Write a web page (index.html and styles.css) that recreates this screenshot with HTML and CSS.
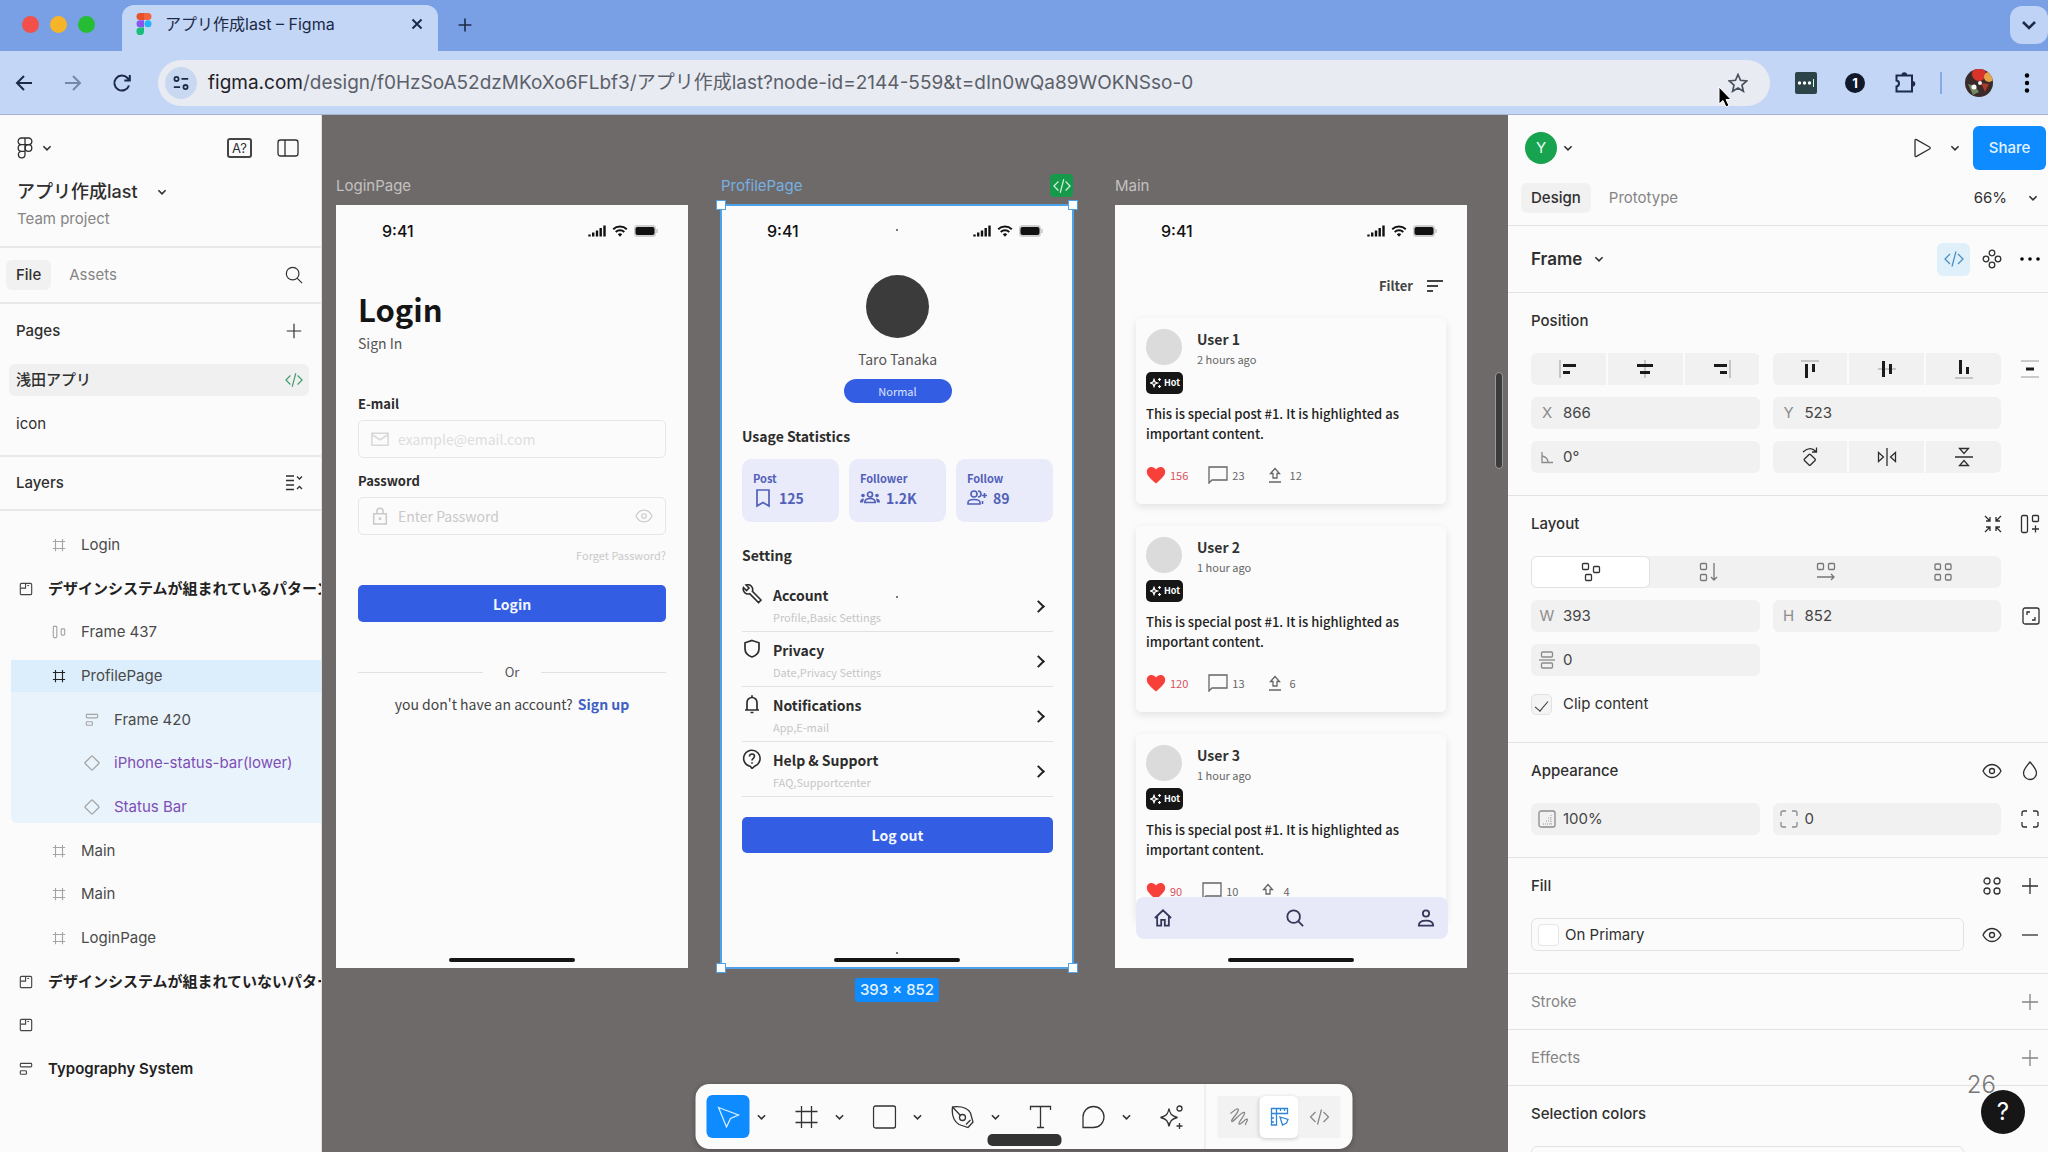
FILE: index.html
```html
<!DOCTYPE html>
<html lang="ja">
<head>
<meta charset="utf-8">
<title>アプリ作成last – Figma</title>
<link rel="stylesheet" href="styles.css">
</head>
<body>
<svg class="sprite" aria-hidden="true">
  <symbol id="chev" viewBox="0 0 10 10"><path d="M2 3.500l3 3 3-3"/></symbol>
  <symbol id="plus" viewBox="0 0 20 20"><path d="M10 2v16M2 10h16"/></symbol>
  <symbol id="minus" viewBox="0 0 20 20"><path d="M2 10h16"/></symbol>
  <symbol id="code" viewBox="0 0 20 20"><path d="M6 5l-5 5 5 5M14 5l5 5-5 5M12 2.500L8 17.500"/></symbol>
  <symbol id="hash" viewBox="0 0 16 16"><path d="M4 1v14M12 1v14M1 4h14M1 12h14"/></symbol>
  <symbol id="section" viewBox="0 0 16 16"><rect x="1.500" y="1.500" width="13" height="13" rx="1.500"/><path d="M2 7h5.500V2M9.500 4h2"/></symbol>
  <symbol id="autoh" viewBox="0 0 16 16"><rect x="1.500" y="1.500" width="4" height="13" rx="1"/><rect x="10.500" y="4.500" width="4" height="7" rx="1"/></symbol>
  <symbol id="autov" viewBox="0 0 16 16"><rect x="1.500" y="1.500" width="13" height="4" rx="1"/><rect x="1.500" y="10" width="7" height="4" rx="1"/></symbol>
  <symbol id="diamond" viewBox="0 0 18 18"><rect x="3.800" y="3.800" width="10.400" height="10.400" rx="1" transform="rotate(45 9 9)"/></symbol>
  <symbol id="eye" viewBox="0 0 20 16"><path d="M1 8c2-4 5-6.500 9-6.500S17 4 19 8c-2 4-5 6.500-9 6.500S3 12 1 8z"/><circle cx="10" cy="8" r="2.500"/></symbol>
  <symbol id="search" viewBox="0 0 20 20"><circle cx="8.500" cy="8.500" r="7"/><path d="M13.700 13.700L19 19"/></symbol>
  <symbol id="signal" viewBox="0 0 18 12"><path d="M1.500 9.500v2M5.200 7.500v4M9 5.500v6M12.700 3v8.500M16.500.5v11" stroke-width="2.400"/></symbol>
  <symbol id="wifi" viewBox="0 0 16 12"><path d="M1.200 4.200a10 10 0 0 1 13.600 0M3.700 7a6.300 6.300 0 0 1 8.600 0" stroke-width="1.900"/><path d="M8 11.800L5.800 9.300a3.200 3.200 0 0 1 4.400 0z" fill="currentColor" stroke="none"/></symbol>
  <symbol id="battery" viewBox="0 0 24 12"><rect x="0" y="0" width="22" height="12" rx="3.500" fill="#cfcfcf" stroke="none"/><rect x="1.500" y="2" width="19" height="8" rx="2" fill="#111" stroke="none"/><path d="M23 4v4" stroke="#bdbdbd"/></symbol>
  <symbol id="heart" viewBox="0 0 20 18"><path d="M10 17.500C4 12.500.8 9.500.8 5.800.8 3 3 1 5.500 1 7.400 1 9 2 10 3.500 11 2 12.600 1 14.500 1 17 1 19.200 3 19.200 5.800c0 3.700-3.200 6.700-9.200 11.700z" fill="#f8403a" stroke="none"/></symbol>
  <symbol id="comment" viewBox="0 0 20 18"><path d="M1 17V1h18v13H4z"/></symbol>
  <symbol id="upload" viewBox="0 0 14 16"><path d="M5 11V6.500H2.500L7 1.500l4.500 5H9V11zM1 15h12"/></symbol>
  <symbol id="spark" viewBox="0 0 12 12"><path d="M4 2.500L5 5l2.500 1L5 7 4 9.500 3 7 .5 6 3 5z"/><path d="M9.500 1v3M8 2.500h3M9.500 8v3M8 9.500h3" stroke-width="1.200"/></symbol>
  <symbol id="four" viewBox="0 0 20 20"><rect x="2" y="2" width="5.500" height="5.500" rx="1"/><rect x="12.500" y="2" width="5.500" height="5.500" rx="1"/><rect x="2" y="12.500" width="5.500" height="5.500" rx="1"/><rect x="12.500" y="12.500" width="5.500" height="5.500" rx="1"/></symbol>
  <symbol id="corners" viewBox="0 0 20 20"><path d="M2 7V4q0-2 2-2h3M13 2h3q2 0 2 2v3M18 13v3q0 2-2 2h-3M7 18H4q-2 0-2-2v-3"/></symbol>
</svg>

<header class="browser">
  <div class="tabstrip">
    <div class="lights"><i class="light red"></i><i class="light amber"></i><i class="light green"></i></div>
    <div class="tab">
      <svg class="favicon" viewBox="0 0 16 22"><path d="M4 0h4v7H4a3.500 3.500 0 0 1 0-7z" fill="#e8502c"/><path d="M8 0h4a3.500 3.500 0 0 1 0 7H8z" fill="#f0653f"/><path d="M4 7.300h4v7H4a3.500 3.500 0 0 1 0-7z" fill="#8b55f0"/><circle cx="12" cy="10.800" r="3.500" fill="#25b4f5"/><path d="M4 14.600h4V18a3.800 3.800 0 1 1-4-3.400z" fill="#17bf78"/></svg>
      <span class="tab-title">アプリ作成last – Figma</span>
      <button class="plain" aria-label="Close tab"><svg class="ic s16 b2" viewBox="0 0 16 16"><path d="M3.500 3.500l9 9M12.500 3.500l-9 9"/></svg></button>
    </div>
    <button class="plain newtab" aria-label="New tab"><svg class="ic s16 b2" viewBox="0 0 20 20"><use href="#plus"/></svg></button>
    <button class="tabsearch" aria-label="Search tabs"><svg class="ic s20" viewBox="0 0 10 10"><use href="#chev"/></svg></button>
  </div>
  <div class="navbar">
    <div class="navkeys">
      <button class="plain" aria-label="Back"><svg class="ic s20 b2" viewBox="0 0 20 20"><path d="M18 10H3M10 3l-7 7 7 7"/></svg></button>
      <button class="plain faded" aria-label="Forward"><svg class="ic s20 b2" viewBox="0 0 20 20"><path d="M2 10h15M10 3l7 7-7 7"/></svg></button>
      <button class="plain" aria-label="Reload"><svg class="ic s20 b2" viewBox="0 0 20 20"><path d="M17 12.500A7.500 7.500 0 1 1 15.500 5L17.500 7M17.800 2v5.500h-5.500"/></svg></button>
    </div>
    <div class="omnibox">
      <span class="site"><svg class="ic s18 b2" viewBox="0 0 20 20"><circle cx="5" cy="5.500" r="2.300"/><path d="M10.500 5.500H18M2 14.500h7"/><circle cx="15" cy="14.500" r="2.300"/></svg></span>
      <p class="url"><b>figma.com</b>/design/f0HzSoA52dzMKoXo6FLbf3/アプリ作成last?node-id=2144-559&amp;t=dIn0wQa89WOKNSso-0</p>
      <button class="plain star" aria-label="Bookmark"><svg class="ic s20" viewBox="0 0 20 20"><path stroke-width="1.700" d="M10 1.500l2.500 5.800 6.300.6-4.800 4.200 1.400 6.200L10 15l-5.400 3.300L6 12.100 1.200 7.900l6.300-.6z"/></svg></button>
    </div>
    <div class="exts">
      <button class="plain" aria-label="Extension"><svg class="s22" viewBox="0 0 22 22"><rect width="22" height="22" rx="2" fill="#2c4447"/><circle cx="4.500" cy="11" r="1.700" fill="#fff"/><circle cx="9.500" cy="11" r="1.700" fill="#fff"/><circle cx="14.500" cy="11" r="1.700" fill="#fff"/><path d="M18.500 7v8" stroke="#cfe"/></svg></button>
      <button class="plain round1">1</button>
      <button class="plain" aria-label="Extensions"><svg class="ic s24 b2" viewBox="0 0 24 24"><path d="M3.500 4.500h15.500V20.500H3.500v-5q2.500-.5 2.500-3t-2.500-3z"/><path d="M8.500 4a2.800 2.800 0 0 1 5.600 0zM19.500 10a2.800 2.800 0 0 1 0 5.600z" fill="currentColor" stroke="none"/></svg></button>
      <i class="bar"></i>
      <button class="plain" aria-label="Account"><svg class="s28" viewBox="0 0 28 28"><clipPath id="pc"><circle cx="14" cy="14" r="14"/></clipPath><g clip-path="url(#pc)"><rect width="28" height="28" fill="#3a2b2a"/><circle cx="14" cy="5" r="7" fill="#d8342c"/><circle cx="24" cy="8" r="5" fill="#e8a24a"/><path d="M3 15l7 2 4 6-6 3z" fill="#6f8a62"/><circle cx="9" cy="18" r="2.500" fill="#fff"/><path d="M16 14l8 1-4 8z" fill="#a83a2a"/><circle cx="15" cy="14" r="2" fill="#eee"/></g></svg></button>
      <button class="plain kebab" aria-label="Menu"><svg class="s20" viewBox="0 0 20 20"><circle cx="10" cy="2.500" r="2.200"/><circle cx="10" cy="10" r="2.200"/><circle cx="10" cy="17.500" r="2.200"/></svg></button>
    </div>
  </div>
  <svg class="cursor" viewBox="0 0 14 22"><path d="M1 1v17l4-3.500 3 6.500 3-1.500-3-6h5z" fill="#000" stroke="#fff"/></svg>
</header>

<main class="app">
  <aside class="left">
    <div class="filehead">
      <div class="row between">
        <button class="plain logo" aria-label="Main menu"><svg class="ic figlogo" viewBox="0 0 16 22"><path d="M8 1H4.500a3.300 3.300 0 0 0 0 6.700H8zM8 1h3.500a3.300 3.300 0 0 1 0 6.700H8zM8 7.700H4.500a3.300 3.300 0 0 0 0 6.600H8zM4.500 14.300A3.300 3.300 0 1 0 8 17.600v-3.300z"/><circle cx="11.500" cy="11" r="3.300"/></svg><svg class="ic s10" viewBox="0 0 10 10"><use href="#chev"/></svg></button>
        <div class="row headicons">
          <button class="aq">A?</button>
          <button class="plain" aria-label="Toggle panel"><svg class="ic s22" viewBox="0 0 22 22"><rect x="1" y="3" width="20" height="16" rx="2.500"/><path d="M8 3v16"/></svg></button>
        </div>
      </div>
      <h1 class="filename">アプリ作成last <svg class="ic s10" viewBox="0 0 10 10"><use href="#chev"/></svg></h1>
      <p class="project">Team project</p>
    </div>
    <div class="lefttabs">
      <button class="pill on">File</button><button class="pill">Assets</button>
      <button class="plain push" aria-label="Find"><svg class="ic s18" viewBox="0 0 20 20"><use href="#search"/></svg></button>
    </div>
    <div class="pages">
      <div class="subhead"><h2>Pages</h2><button class="plain" aria-label="Add page"><svg class="ic s18" viewBox="0 0 20 20"><use href="#plus"/></svg></button></div>
      <a class="page current" href="#p1">浅田アプリ<svg class="ic s18 jade" viewBox="0 0 20 20"><use href="#code"/></svg></a>
      <a class="page" href="#p2">icon</a>
    </div>
    <div class="subhead layershead"><h2>Layers</h2><button class="plain" aria-label="Collapse layers"><svg class="ic s18" viewBox="0 0 18 18"><path d="M1 2h8M1 6.500h8M1 11h8M1 15.500h8M12 2.500l2.500 2.500L17 2.500M12 15l2.500-2.500L17 15"/></svg></button></div>
    <ul class="layers">
      <li class="layer d1"><svg class="ic s14" viewBox="0 0 16 16"><use href="#hash"/></svg>Login</li>
      <li class="layer d0"><svg class="ic s14" viewBox="0 0 16 16"><use href="#section"/></svg>デザインシステムが組まれているパターン</li>
      <li class="layer d1"><svg class="ic s14" viewBox="0 0 16 16"><use href="#autoh"/></svg>Frame 437</li>
      <li class="group"><ul>
        <li class="layer d1 sel"><svg class="ic s14" viewBox="0 0 16 16"><use href="#hash"/></svg>ProfilePage</li>
        <li class="layer d2"><svg class="ic s14" viewBox="0 0 16 16"><use href="#autov"/></svg>Frame 420</li>
        <li class="layer d2 comp"><svg class="ic s18" viewBox="0 0 18 18"><use href="#diamond"/></svg>iPhone-status-bar(lower)</li>
        <li class="layer d2 comp"><svg class="ic s18" viewBox="0 0 18 18"><use href="#diamond"/></svg>Status Bar</li>
      </ul></li>
      <li class="layer d1"><svg class="ic s14" viewBox="0 0 16 16"><use href="#hash"/></svg>Main</li>
      <li class="layer d1"><svg class="ic s14" viewBox="0 0 16 16"><use href="#hash"/></svg>Main</li>
      <li class="layer d1"><svg class="ic s14" viewBox="0 0 16 16"><use href="#hash"/></svg>LoginPage</li>
      <li class="layer d0"><svg class="ic s14" viewBox="0 0 16 16"><use href="#section"/></svg>デザインシステムが組まれていないパターン</li>
      <li class="layer d0"><svg class="ic s14" viewBox="0 0 16 16"><use href="#section"/></svg></li>
      <li class="layer d0"><svg class="ic s14" viewBox="0 0 16 16"><use href="#autov"/></svg>Typography System</li>
    </ul>
  </aside>

  <section class="canvas">
    <article class="frame f1">
      <h2 class="flabel">LoginPage</h2>
      <div class="phone">
        <div class="status"><span>9:41</span><svg class="ic signal" viewBox="0 0 18 12"><use href="#signal"/></svg><svg class="ic wifi" viewBox="0 0 16 12"><use href="#wifi"/></svg><svg class="ic batt" viewBox="0 0 24 12"><use href="#battery"/></svg></div>
        <form class="login">
          <h1>Login</h1>
          <p class="signin">Sign In</p>
          <label for="em">E-mail</label>
          <div class="field"><svg class="ic s18" viewBox="0 0 20 20"><path stroke-width="1.700" d="M1 3.500h18v13.500H1zM1 5l9 6 9-6"/></svg><input id="em" type="email" placeholder="example@email.com"></div>
          <label for="pw">Password</label>
          <div class="field darker"><svg class="ic s18" viewBox="0 0 20 20"><path stroke-width="1.700" d="M3 7.500h14V19H3zM6.500 7.500V5a3.500 3.500 0 0 1 7 0v2.500"/><circle cx="10" cy="13" r="1"/></svg><input id="pw" type="password" placeholder="Enter Password"><svg class="ic s18" viewBox="0 0 20 16"><use href="#eye"/></svg></div>
          <a class="forgot" href="#f">Forget Password?</a>
          <button type="button" class="primary">Login</button>
          <div class="or"><i></i><span>Or</span><i></i></div>
          <p class="signup">you don't have an account? <a href="#s">Sign up</a></p>
        </form>
        <i class="homebar"></i>
      </div>
    </article>

    <article class="frame f2">
      <h2 class="flabel">ProfilePage</h2>
      <div class="phone">
        <div class="status"><span>9:41</span><svg class="ic signal" viewBox="0 0 18 12"><use href="#signal"/></svg><svg class="ic wifi" viewBox="0 0 16 12"><use href="#wifi"/></svg><svg class="ic batt" viewBox="0 0 24 12"><use href="#battery"/></svg></div>
        <div class="profile">
          <div class="who"><i class="face"></i><p>Taro Tanaka</p><span class="tag">Normal</span></div>
          <h3 class="usage">Usage Statistics</h3>
          <div class="stats">
            <div class="stat"><span>Post</span><p><svg class="ic s20" viewBox="0 0 20 20"><path stroke-width="1.700" d="M4 2h12v16l-6-3.500L4 18z"/></svg>125</p></div>
            <div class="stat"><span>Follower</span><p><svg class="ic s20" viewBox="0 0 20 20"><g fill="currentColor" stroke="none"><circle cx="3" cy="7.500" r="1.800"/><circle cx="17" cy="7.500" r="1.800"/><path d="M0 14.500c0-3 1.500-4 4-4l-1 4zM20 14.500c0-3-1.500-4-4-4l1 4z"/></g><circle cx="10" cy="6.500" r="2.500" stroke-width="1.700"/><path stroke-width="1.700" d="M4.800 14.500c0-3 2-4 5.200-4s5.200 1 5.200 4z"/></svg>1.2K</p></div>
            <div class="stat"><span>Follow</span><p><svg class="ic s20" viewBox="0 0 20 20"><g stroke-width="1.600"><circle cx="7" cy="6" r="3"/><path d="M1 16v-1.500c0-2 3-3 6-3s6 1 6 3V16zM11 3a3 3 0 0 1 0 6M15.500 16v-3M17.500 5v5M15 7.500h5"/></g></svg>89</p></div>
          </div>
          <h3 class="setting">Setting</h3>
          <ul class="settings">
            <li><svg class="ic s20" viewBox="0 0 20 20"><path stroke-width="1.600" d="M1.500 3.500l3 3 2.500-2.500-3-3c2-.6 4-.2 5.400 1.200 1.300 1.400 1.600 3.200 1 5L19 16l-2.500 2.500-8.800-8.800c-1.800.6-3.600.2-5-1.100C1.300 7.200.9 5.300 1.500 3.500z"/></svg><div><b>Account</b><small>Profile,Basic Settings</small></div></li>
            <li><svg class="ic s20" viewBox="0 0 20 20"><path stroke-width="1.700" d="M10 1.500l7 2.300v6c0 4-3 7-7 8.200-4-1.200-7-4.200-7-8.200v-6z"/></svg><div><b>Privacy</b><small>Date,Privacy Settings</small></div></li>
            <li><svg class="ic s20" viewBox="0 0 20 20"><path stroke-width="1.700" d="M3 16h14M5 16V8.500a5 5 0 0 1 10 0V16M10 1.200v2M8.500 18.500h3"/></svg><div><b>Notifications</b><small>App,E-mail</small></div></li>
            <li><svg class="ic s20" viewBox="0 0 20 20"><path stroke-width="1.600" d="M8.500 17.500A8.200 8.200 0 1 1 13 17l-3 2.500zM7.500 7.500c0-3.500 5-3.200 5-.2 0 2-2.500 2-2.500 4.200M10 13.200v1.500"/></svg><div><b>Help &amp; Support</b><small>FAQ,Supportcenter</small></div></li>
          </ul>
          <button class="primary">Log out</button>
        </div>
        <i class="homebar"></i>
      </div>
      <i class="outline"></i><i class="h tl"></i><i class="h tr"></i><i class="h bl"></i><i class="h br"></i>
      <i class="dot t"></i><i class="dot m"></i><i class="dot b"></i>
      <span class="dev"><svg class="ic s18" viewBox="0 0 20 20"><use href="#code"/></svg></span>
      <span class="size">393 × 852</span>
    </article>

    <article class="frame f3">
      <h2 class="flabel">Main</h2>
      <div class="phone">
        <div class="status"><span>9:41</span><svg class="ic signal" viewBox="0 0 18 12"><use href="#signal"/></svg><svg class="ic wifi" viewBox="0 0 16 12"><use href="#wifi"/></svg><svg class="ic batt" viewBox="0 0 24 12"><use href="#battery"/></svg></div>
        <div class="feed">
          <button class="filter">Filter<svg class="ic s18" viewBox="0 0 18 18"><path stroke-width="2" d="M1 4h16M1 9h11M1 14h6"/></svg></button>
          <div class="post">
            <div class="by"><i></i><div><b>User 1</b><small>2 hours ago</small></div></div>
            <span class="hot"><svg class="ic s12" viewBox="0 0 12 12"><use href="#spark"/></svg>Hot</span>
            <p>This is special post #1. It is highlighted as important content.</p>
            <div class="acts"><span class="like"><svg class="ic s20" viewBox="0 0 20 18"><use href="#heart"/></svg>156</span><span><svg class="ic s20" viewBox="0 0 20 18"><use href="#comment"/></svg>23</span><span class="up"><svg class="ic s16" viewBox="0 0 14 16"><use href="#upload"/></svg>12</span></div>
          </div>
          <div class="post">
            <div class="by"><i></i><div><b>User 2</b><small>1 hour ago</small></div></div>
            <span class="hot"><svg class="ic s12" viewBox="0 0 12 12"><use href="#spark"/></svg>Hot</span>
            <p>This is special post #1. It is highlighted as important content.</p>
            <div class="acts"><span class="like"><svg class="ic s20" viewBox="0 0 20 18"><use href="#heart"/></svg>120</span><span><svg class="ic s20" viewBox="0 0 20 18"><use href="#comment"/></svg>13</span><span class="up"><svg class="ic s16" viewBox="0 0 14 16"><use href="#upload"/></svg>6</span></div>
          </div>
          <div class="post">
            <div class="by"><i></i><div><b>User 3</b><small>1 hour ago</small></div></div>
            <span class="hot"><svg class="ic s12" viewBox="0 0 12 12"><use href="#spark"/></svg>Hot</span>
            <p>This is special post #1. It is highlighted as important content.</p>
            <div class="acts"><span class="like"><svg class="ic s20" viewBox="0 0 20 18"><use href="#heart"/></svg>90</span><span><svg class="ic s20" viewBox="0 0 20 18"><use href="#comment"/></svg>10</span><span class="up"><svg class="ic s16" viewBox="0 0 14 16"><use href="#upload"/></svg>4</span></div>
          </div>
        </div>
        <nav class="tabbar">
          <svg class="ic s18 b2" viewBox="0 0 20 20"><path d="M1 10l9-8.500L19 10M3.500 8v10.500H8V12h4v6.500h4.500V8"/></svg>
          <svg class="ic s18 b2" viewBox="0 0 20 20"><use href="#search"/></svg>
          <svg class="ic s18 b2" viewBox="0 0 20 20"><circle cx="10" cy="5" r="3.500"/><path d="M2 18.500c0-4 3-5.500 8-5.500s8 1.500 8 5.500z"/></svg>
        </nav>
        <i class="homebar"></i>
      </div>
    </article>
    <i class="scroll"></i>
  </section>

  <aside class="right">
    <div class="people">
      <span class="me">Y</span><svg class="ic s10" viewBox="0 0 10 10"><use href="#chev"/></svg>
      <button class="plain push" aria-label="Present"><svg class="ic s20" viewBox="0 0 20 20"><path d="M3 2.500q0-1.500 1.500-.8L17.500 9q1.500 1 0 2l-13 7.300q-1.500.7-1.500-.8z"/></svg></button>
      <svg class="ic s10 gapped" viewBox="0 0 10 10"><use href="#chev"/></svg>
      <button class="share">Share</button>
    </div>
    <div class="modes">
      <button class="pill on">Design</button><button class="pill">Prototype</button>
      <button class="zoom">66%<svg class="ic s10" viewBox="0 0 10 10"><use href="#chev"/></svg></button>
    </div>
    <div class="kind">
      <h2>Frame</h2><svg class="ic s10" viewBox="0 0 10 10"><use href="#chev"/></svg>
      <button class="devbtn" aria-label="Ready for dev"><svg class="ic s20" viewBox="0 0 20 20"><use href="#code"/></svg></button>
      <button class="plain" aria-label="Create component"><svg class="ic s20" viewBox="0 0 20 20"><circle cx="10" cy="4" r="2.800"/><circle cx="4" cy="10" r="2.800"/><circle cx="16" cy="10" r="2.800"/><circle cx="10" cy="16" r="2.800"/></svg></button>
      <button class="plain more" aria-label="More"><svg class="s20" viewBox="0 0 20 20"><circle cx="2" cy="10" r="1.800"/><circle cx="10" cy="10" r="1.800"/><circle cx="18" cy="10" r="1.800"/></svg></button>
    </div>
    <section class="sec">
      <h3>Position</h3>
      <div class="grid">
        <div class="seg"><button aria-label="Align left"><svg class="ic s20" viewBox="0 0 20 20"><path d="M2 1v18" class="thin"/><path d="M5 6.500h13M5 13.500h7" class="fat"/></svg></button><button aria-label="Align centre"><svg class="ic s20" viewBox="0 0 20 20"><path d="M10 1v18" class="thin"/><path d="M2 6.500h16M5 13.500h10" class="fat"/></svg></button><button aria-label="Align right"><svg class="ic s20" viewBox="0 0 20 20"><path d="M18 1v18" class="thin"/><path d="M2 6.500h13M8 13.500h7" class="fat"/></svg></button></div>
        <div class="seg"><button aria-label="Align top"><svg class="ic s20" viewBox="0 0 20 20"><path d="M1 2h18" class="thin"/><path d="M6.500 5v14M13.500 5v8" class="fat"/></svg></button><button aria-label="Align middle"><svg class="ic s20" viewBox="0 0 20 20"><path d="M1 10h18" class="thin"/><path d="M6.500 2v16M13.500 5v10" class="fat"/></svg></button><button aria-label="Align bottom"><svg class="ic s20" viewBox="0 0 20 20"><path d="M1 19h18" class="thin"/><path d="M6.500 1v14M13.500 8v7" class="fat"/></svg></button></div>
        <button class="plain" aria-label="Distribute"><svg class="ic s20" viewBox="0 0 20 20"><path d="M1 2h18M1 18h18" class="thin"/><path d="M6 10h8" class="fat"/></svg></button>
        <label class="val"><span>X</span><input value="866"></label>
        <label class="val"><span>Y</span><input value="523"></label><i></i>
        <label class="val" aria-label="Rotation"><span><svg class="ic s14" viewBox="0 0 14 14"><path d="M2 2v10.500h11M2 6a7 7 0 0 1 6 6.500"/></svg></span><input value="0°"></label>
        <div class="seg"><button aria-label="Rotate"><svg class="ic s20" viewBox="0 0 20 20"><rect x="5.500" y="8.500" width="8.500" height="8.500" rx="1" transform="rotate(45 9.750 12.750)"/><path d="M3 5q7-6.500 13-.5M16.500.5v4.500H12"/></svg></button><button aria-label="Flip horizontal"><svg class="ic s20" viewBox="0 0 20 20"><path d="M10 1v18M1.500 5.500v9L6.500 10zM18.500 5.500v9L13.500 10z"/></svg></button><button aria-label="Flip vertical"><svg class="ic s20" viewBox="0 0 20 20"><path d="M1 10h18M5.500 1.500h9L10 6.500zM5.500 18.500h9L10 13.500z"/></svg></button></div>
      </div>
    </section>
    <section class="sec">
      <div class="sechead"><h3>Layout</h3><button class="plain" aria-label="Resize to fit"><svg class="ic s18" viewBox="0 0 18 18"><path d="M1 1l5 5M6 2v4H2M17 1l-5 5M12 2v4h4M1 17l5-5M2 12h4v4M17 17l-5-5M16 12h-4v4"/></svg></button><button class="plain" aria-label="Add auto layout"><svg class="ic s20" viewBox="0 0 20 20"><rect x="1.500" y="1.500" width="6" height="17" rx="1.500"/><rect x="12.500" y="1.500" width="6" height="6" rx="1"/><path d="M15.500 11.500v7M12 15h7"/></svg></button></div>
      <div class="grid">
        <div class="flow"><button class="on" aria-label="Freeform"><svg class="ic s20" viewBox="0 0 20 20"><rect x="1.500" y="1.500" width="6" height="6" rx="1"/><rect x="12.500" y="4.500" width="6" height="6" rx="1"/><rect x="4.500" y="12.500" width="6" height="6" rx="1"/></svg></button><button aria-label="Vertical"><svg class="ic s20" viewBox="0 0 20 20"><rect x="1.500" y="1.500" width="6" height="6" rx="1"/><rect x="1.500" y="12.500" width="6" height="6" rx="1"/><path d="M15 1v17M12 15l3 3 3-3"/></svg></button><button aria-label="Horizontal"><svg class="ic s20" viewBox="0 0 20 20"><rect x="1.500" y="1.500" width="6" height="6" rx="1"/><rect x="12.500" y="1.500" width="6" height="6" rx="1"/><path d="M1 15h17M15 12l3 3-3 3"/></svg></button><button aria-label="Grid"><svg class="ic s20" viewBox="0 0 20 20"><use href="#four"/></svg></button></div><i></i>
        <label class="val"><span>W</span><input value="393"></label>
        <label class="val"><span>H</span><input value="852"></label>
        <button class="plain" aria-label="Lock aspect ratio"><svg class="ic s18" viewBox="0 0 18 18"><rect x="1" y="1" width="16" height="16" rx="2"/><path d="M5 8V5h3M13 10v3h-3"/></svg></button>
        <label class="val" aria-label="Spacing"><span><svg class="ic s18" viewBox="0 0 18 18"><rect x="3.500" y="1" width="11" height="5" rx="1"/><path d="M1 9h16"/><rect x="3.500" y="12" width="11" height="5" rx="1"/></svg></span><input value="0"></label><i></i><i></i>
        <label class="clip"><input type="checkbox" checked>Clip content</label>
      </div>
    </section>
    <section class="sec">
      <div class="sechead"><h3>Appearance</h3><button class="plain" aria-label="Hide"><svg class="ic s20" viewBox="0 0 20 16"><use href="#eye"/></svg></button><button class="plain" aria-label="Blend"><svg class="ic s20" viewBox="0 0 20 20"><path d="M10 1c4 4.500 6.500 7.500 6.500 11a6.500 6.500 0 0 1-13 0C3.500 8.500 6 5.500 10 1z"/></svg></button></div>
      <div class="grid">
        <label class="val" aria-label="Opacity"><span><svg class="ic s18" viewBox="0 0 18 18"><rect x="1" y="1" width="16" height="16" rx="2"/><path d="M5 14h9M8 11h6M10 8h4M13 5v9" stroke="#bbb" stroke-dasharray="1 1"/></svg></span><input value="100%"></label>
        <label class="val" aria-label="Corner radius"><span><svg class="ic s20" viewBox="0 0 20 20"><use href="#corners"/></svg></span><input value="0"></label>
        <button class="plain" aria-label="Individual corners"><svg class="ic s20" viewBox="0 0 20 20"><use href="#corners"/></svg></button>
      </div>
    </section>
    <section class="sec">
      <div class="sechead"><h3>Fill</h3><button class="plain" aria-label="Styles"><svg class="ic s20" viewBox="0 0 20 20"><circle cx="5" cy="5" r="3"/><circle cx="15" cy="5" r="3"/><circle cx="5" cy="15" r="3"/><circle cx="15" cy="15" r="3"/></svg></button><button class="plain" aria-label="Add fill"><svg class="ic s20" viewBox="0 0 20 20"><use href="#plus"/></svg></button></div>
      <div class="fillrow"><button class="style"><i></i>On Primary</button><button class="plain" aria-label="Hide fill"><svg class="ic s20" viewBox="0 0 20 16"><use href="#eye"/></svg></button><button class="plain" aria-label="Remove fill"><svg class="ic s20" viewBox="0 0 20 20"><use href="#minus"/></svg></button></div>
    </section>
    <section class="sec off"><div class="sechead"><h3>Stroke</h3><button class="plain" aria-label="Add stroke"><svg class="ic s20" viewBox="0 0 20 20"><use href="#plus"/></svg></button></div></section>
    <section class="sec off"><div class="sechead"><h3>Effects</h3><button class="plain" aria-label="Add effect"><svg class="ic s20" viewBox="0 0 20 20"><use href="#plus"/></svg></button></div></section>
    <section class="sec"><h3>Selection colors</h3><div class="fillrow"><button class="style last" aria-label="Colour"></button></div></section>
  </aside>
</main>

<div class="toolbar">
  <button class="tool active" aria-label="Move"><svg class="ic s24" viewBox="0 0 24 24"><path d="M2 2.500l20 7.500-8 3.500-4 8.500z"/></svg></button><svg class="ic s10" viewBox="0 0 10 10"><use href="#chev"/></svg>
  <button class="tool" aria-label="Frame"><svg class="ic s24" viewBox="0 0 24 24"><path d="M7 1v22M17 1v22M1 6.500h22M1 17.500h22"/></svg></button><svg class="ic s10" viewBox="0 0 10 10"><use href="#chev"/></svg>
  <button class="tool" aria-label="Rectangle"><svg class="ic s24" viewBox="0 0 24 24"><rect x="1" y="1" width="22" height="22" rx="2"/></svg></button><svg class="ic s10" viewBox="0 0 10 10"><use href="#chev"/></svg>
  <button class="tool" aria-label="Pen"><svg class="ic s24" viewBox="0 0 24 24"><path d="M2 2c8-1 15 1 18 6l2.500 9-5 5.500-9-3C3 16 1 10 2 2zM2 2l8 8.500M20 15l-4.500 4.500"/><circle cx="12" cy="12.500" r="3"/></svg></button><svg class="ic s10" viewBox="0 0 10 10"><use href="#chev"/></svg>
  <button class="tool wide" aria-label="Text"><svg class="ic s24" viewBox="0 0 24 24"><path d="M2 5V1.500h20V5M12 1.500v21M8.500 22.500h7"/></svg></button>
  <button class="tool" aria-label="Comment"><svg class="ic s24" viewBox="0 0 24 24"><path d="M1.500 22.500V12A10.500 10.500 0 1 1 12 22.500z"/></svg></button><svg class="ic s10" viewBox="0 0 10 10"><use href="#chev"/></svg>
  <button class="tool" aria-label="Actions"><svg class="ic s24" viewBox="0 0 24 24"><path d="M9.500 3.500c1 5.500 2.500 7.500 8.500 9-6 1.500-7.500 3.500-8.500 9-1-5.500-2.500-7.500-8.500-9 6-1.500 7.500-3.500 8.500-9z"/><circle cx="20" cy="3.500" r="2.500"/><path d="M20 18v6M17 21h6"/></svg></button>
  <div class="modeswitch">
    <button aria-label="Draw"><svg class="ic s20" viewBox="0 0 20 20"><path d="M2 6.500C5 4 8 1.500 9.500 2S8 7 5.500 10s-3 5-1.500 4.500S10 8.500 13 6.500s4-1.500 2.500 1.500-6 8-5 9 4-2.500 6-4 3-1 2 1-2 3-1.500 4"/></svg></button>
    <button class="on" aria-label="Design"><svg class="ic s20" viewBox="0 0 20 20"><path d="M2 18V1.500h16v5H7V18zM2 6.500h5M7 1.500v5M11 1.500v2.500M15 1.500v2.500M2 11h2.500M2 15h2.500M10.500 10l8 2.500-1.500 3.500-4 2z"/></svg></button>
    <button aria-label="Dev mode"><svg class="ic s20" viewBox="0 0 20 20"><use href="#code"/></svg></button>
  </div>
  <i class="dockbar"></i>
</div>
<span class="slide-no">26</span>
<button class="help">?</button>
</body>
</html>
```
FILE: styles.css
```css
* { box-sizing: border-box; }
body, h1, h2, h3, p, ul { margin: 0; padding: 0; }
ul { list-style: none; }
body {
  height: 100vh;
  display: flex;
  flex-direction: column;
  overflow: hidden;
  position: relative;
  font: 15px/20px Inter, "Noto Sans CJK JP", sans-serif;
  color: #2f2f2f;
  background: #fbfbfb;
}
button, input { font: inherit; color: inherit; margin: 0; padding: 0; border: 0; background: none; }
a { color: inherit; text-decoration: none; }
i { font-style: normal; }
.sprite { position: absolute; width: 0; height: 0; }
.ic { fill: none; stroke: currentColor; stroke-width: 1.300; flex: none; display: block; }
.b2 { stroke-width: 2; }
.s10 { width: 12px; height: 12px; }
.s12 { width: 12px; height: 12px; }
.s14 { width: 14px; height: 14px; }
.s16 { width: 16px; height: 16px; }
.s18 { width: 18px; height: 18px; }
.s20 { width: 20px; height: 20px; }
.s22 { width: 22px; height: 22px; }
.s24 { width: 24px; height: 24px; }
.s28 { width: 28px; height: 28px; }
.plain { display: flex; align-items: center; justify-content: center; }
.push { margin-left: auto; }
.row { display: flex; align-items: center; }
.between { justify-content: space-between; }

/* Browser chrome */
.browser { flex: none; position: relative; color: #1c2a48; }
.tabstrip { display: flex; align-items: center; height: 51px; background: #799fe5; padding: 0 0 2px 22px; }
.lights { display: flex; gap: 11px; width: 100px; }
.light { width: 17px; height: 17px; border-radius: 50%; }
.red { background: #f3504c; }
.amber { background: #f6b429; }
.green { background: #26bd35; }
.tab { align-self: flex-end; display: flex; align-items: center; width: 316px; height: 46px; margin-bottom: -2px; padding: 0 13px 8px 14px; border-radius: 12px 12px 0 0; background: #c3d6f5; }
.favicon { width: 16px; height: 22px; margin-right: 13px; }
.tab-title { flex: 1; font-size: 16px; white-space: nowrap; }
.newtab { margin-left: 19px; }
.tabsearch { margin-left: auto; display: flex; align-items: center; justify-content: center; width: 38px; height: 38px; border-radius: 12px; background: #bed3f5; }
.navbar { display: flex; align-items: center; height: 64px; background: #c3d6f5; border-bottom: 1px solid #a3b3d0; }
.navkeys { display: flex; gap: 29px; width: 158px; padding-left: 14px; }
.faded { opacity: .45; }
.omnibox { flex: 1; display: flex; align-items: center; height: 46px; padding: 0 22px 0 7px; border-radius: 23px; background: #e8ebf2; }
.site { display: flex; align-items: center; justify-content: center; width: 32px; height: 32px; border-radius: 50%; background: #c9d8f1; }
.url { flex: 1; margin-left: 11px; font-size: 19px; line-height: 26px; color: #5b6069; white-space: nowrap; }
.url b { font-weight: 400; color: #1f2126; }
.star { color: #4a505c; }
.exts { display: flex; align-items: center; gap: 28px; width: 278px; padding-left: 25px; }
.round1 { width: 20px; height: 20px; border-radius: 50%; background: #101a2c; color: #fff; font-size: 13px; font-weight: 700; }
.bar { width: 2px; height: 22px; margin: 0 -5px; background: #86aae6; }
.kebab { margin-left: -4px; }
.cursor { position: absolute; left: calc(100% - 330px); top: 86px; width: 14px; height: 22px; }

.app { flex: 1; min-height: 0; display: flex; }

/* Left panel */
.left { width: 322px; flex: none; display: flex; flex-direction: column; overflow: hidden; border-right: 1px solid #e0e0e0; background: #fbfbfb; }
.filehead { height: 133px; padding: 22px 22px 0 17px; border-bottom: 2px solid #e9e9e9; }
.logo { gap: 8px; }
.figlogo { width: 16px; height: 22px; }
.headicons { gap: 25px; }
.aq { width: 25px; height: 20px; border: 2px solid #444; border-radius: 3px; font-size: 13px; line-height: 16px; }
.filename { display: flex; align-items: center; gap: 18px; margin-top: 20px; font-size: 18px; line-height: 26px; font-weight: 500; }
.project { margin-top: 4px; color: #858585; }
.lefttabs { display: flex; align-items: center; height: 56px; padding: 0 18px 0 6px; border-bottom: 2px solid #e9e9e9; }
.pill { height: 30px; padding: 0 10px; border-radius: 6px; color: #858585; }
.pill.on { background: #f1f1f1; color: #2f2f2f; font-weight: 500; }
.left .pill + .pill { margin-left: 8px; }
.subhead { display: flex; align-items: center; justify-content: space-between; height: 54px; padding: 0 18px 0 16px; }
h2, h3 { font-size: 15px; line-height: 20px; font-weight: 500; }
.pages { height: 153px; border-bottom: 2px solid #e9e9e9; }
.page { display: flex; align-items: center; justify-content: space-between; height: 32px; margin: 0 12px 12px 9px; padding: 0 6px 0 7px; border-radius: 6px; }
.pages .subhead { margin-bottom: 6px; }
.page.current { background: #f0f0f0; font-weight: 500; }
.jade { color: #3f9c6c; }
.layershead { border-bottom: 2px solid #e9e9e9; }
.layers { flex: 1; display: grid; grid-template-rows: repeat(13, minmax(32px, 1fr)); align-items: center; padding: 12px 0 61px; }
.layer { display: flex; align-items: center; height: 32px; white-space: nowrap; color: #4a4a4a; }
.layer svg { color: #a5a5a5; }
.d0 { gap: 15px; padding-left: 19px; font-weight: 600; color: #222; }
.d0 svg { color: #444; }
.d1 { gap: 15px; padding-left: 52px; }
.group { grid-row: span 4; align-self: stretch; margin: 6px 0 6px 11px; background: #e9f3fb; border-radius: 6px 0 0 6px; }
.group ul { height: 100%; display: flex; flex-direction: column; justify-content: space-between; }
.group .d1 { padding-left: 41px; }
.group .d2 { gap: 15px; padding-left: 74px; }
.group .comp { gap: 13px; padding-left: 72px; }
.comp { color: #7d4fb5; }
.sel { background: #dceefb; }
.sel svg { color: #222; }

/* Canvas: frames are placed freely */
.canvas { flex: 1; min-width: 0; position: relative; overflow: hidden; background: #6e6a69; }
.frame { position: absolute; top: 61px; width: 352px; }
.f1 { left: 14px; }
.f2 { left: 399px; }
.f3 { left: 793px; }
.flabel { height: 29px; font-weight: 400; color: #c4c1c0; }
.f2 .flabel { color: #77b0e2; }
.phone { position: relative; height: 763px; overflow: hidden; background: #fbfbfb; font-family: "Noto Sans CJK JP", sans-serif; font-size: 14px; line-height: 24px; color: #2c2c2c; }
.status { display: flex; align-items: center; height: 52px; padding: 0 30px 0 46px; font: 500 16px/20px Inter, sans-serif; color: #111; }
.status span { margin-right: auto; }
.signal { width: 18px; height: 12px; margin-right: 6px; }
.wifi { width: 16px; height: 12px; margin-right: 6px; }
.batt { width: 24px; height: 12px; }
.homebar { position: absolute; left: 50%; bottom: 6px; width: 126px; height: 4px; margin-left: -63px; border-radius: 2px; background: #151515; }
.primary { display: block; width: 100%; height: 37px; border-radius: 5px; background: #335ee4; color: #f2f5ff; font-weight: 700; }

.login { padding: 32px 22px 0; }
.login h1 { font-size: 31px; line-height: 40px; font-weight: 700; color: #151515; }
.signin { margin-top: 2px; color: #555; }
.login label { display: block; margin-top: 13px; font-size: 13px; line-height: 20px; font-weight: 700; }
.signin + label { margin-top: 39px; }
.field { display: flex; align-items: center; gap: 9px; height: 38px; margin-top: 6px; padding: 0 12px; border: 1px solid #e6e6e6; border-radius: 5px; color: #d8d8d8; }
.field input { flex: 1; min-width: 0; outline: 0; }
.field input::placeholder { color: #dedede; opacity: 1; }
.darker, .field.darker input::placeholder { color: #c9c9c9; }
.forgot { display: block; margin: 12px 0 22px; text-align: right; font-size: 11px; line-height: 16px; color: #c9c9c9; }
.or { display: flex; align-items: center; gap: 22px; margin-top: 40px; font-size: 13px; line-height: 20px; color: #555; }
.or i { flex: 1; height: 1px; background: #e0e0e0; }
.signup { margin-top: 10px; text-align: center; color: #444; white-space: nowrap; }
.signup a { margin-left: 2px; font-weight: 700; color: #3f5fc4; }

.profile { padding: 18px 20px 0 21px; }
.who { display: flex; flex-direction: column; align-items: center; color: #555; }
.face { width: 63px; height: 63px; margin-bottom: 9px; border-radius: 50%; background: #3b3b3b; }
.tag { width: 108px; height: 24px; margin-top: 8px; border-radius: 12px; background: #335ee4; color: #dbe4ff; font-size: 11px; text-align: center; }
.phone h3 { font-size: 14px; line-height: 24px; font-weight: 700; margin-top: 21px; }
.stats { display: grid; grid-template-columns: repeat(3, 1fr); gap: 10px; margin-top: 11px; }
.stat { height: 63px; padding: 11px; border-radius: 9px; background: #eaebfa; color: #5160b8; font-weight: 700; }
.stat span { display: block; font-size: 11px; line-height: 16px; }
.stat p { display: flex; align-items: center; gap: 6px; }
.settings { margin: 10px 0 20px; }
.settings li { display: flex; gap: 11px; height: 55px; padding-top: 7px; border-bottom: 1px solid #e2e2e2; }
.settings li::after { content: ""; width: 7px; height: 7px; margin: 18px 10px 0 auto; border: solid #222; border-width: 2px 2px 0 0; transform: rotate(45deg); }
.settings b { display: block; line-height: 22px; font-weight: 700; }
.settings small { display: block; margin-top: 3px; font-size: 11px; line-height: 16px; color: #c6c6c6; }
.profile .primary { height: 36px; }

.outline { position: absolute; left: -1px; right: -1px; top: 28px; bottom: -1px; border: 2px solid #4ea2ea; }
.h { position: absolute; width: 10px; height: 10px; background: #fff; border: 1px solid #4ea2ea; }
.tl { left: -5px; top: 24px; }
.tr { right: -5px; top: 24px; }
.bl { left: -5px; bottom: -5px; }
.br { right: -5px; bottom: -5px; }
.dot { position: absolute; left: 175px; width: 2px; height: 2px; background: #777; }
.t { top: 53px; }
.m { top: 420px; }
.b { bottom: 14px; }
.dev { position: absolute; right: 0; top: -2px; width: 23px; height: 23px; display: flex; align-items: center; justify-content: center; border-radius: 4px; background: #17994c; color: #d5f5e0; }
.size { position: absolute; left: 50%; bottom: -34px; transform: translateX(-50%); padding: 2px 5px; border-radius: 3px; background: #0d8bff; color: #e4f3ff; font-weight: 500; white-space: nowrap; }

.feed { padding: 19px 21px 0; }
.filter { display: flex; align-items: center; gap: 13px; margin: 0 2px 22px auto; font-size: 13px; line-height: 20px; font-weight: 700; color: #444; }
.post { height: 186px; margin-bottom: 22px; padding: 11px 10px; border-radius: 5px; background: #fbfbfb; box-shadow: 0 3px 9px rgba(0, 0, 0, .1); }
.by { display: flex; gap: 15px; height: 43px; }
.by i { width: 36px; height: 36px; border-radius: 50%; background: #dcdbdb; }
.by b { display: block; line-height: 20px; font-size: 14px; font-weight: 700; color: #333; }
.by small { display: block; margin-top: 2px; font-size: 11px; line-height: 16px; color: #666; }
.hot { display: flex; align-items: center; gap: 2px; width: 37px; height: 22px; padding-left: 4px; border-radius: 5px; background: #161616; color: #fff; font-size: 9px; font-weight: 700; }
.post p { margin: 10px 0 21px; font-size: 13px; line-height: 20px; font-weight: 500; color: #222; }
.acts { display: flex; gap: 20px; font-size: 11px; line-height: 20px; color: #666; }
.acts span { display: flex; align-items: center; gap: 4px; }
.acts .like { color: #d9505c; }
.acts .up { margin-left: 2px; gap: 7px; }
.tabbar { position: absolute; left: 21px; right: 19px; bottom: 29px; display: flex; align-items: center; justify-content: space-between; height: 42px; padding: 0 13px 0 18px; border-radius: 8px; background: #e8e9f8; color: #34375a; }
.scroll { position: absolute; right: 5px; top: 257px; width: 8px; height: 97px; border: 1px solid #999; border-radius: 4px; background: #3c3c3c; }

/* Right panel */
.right { width: 540px; flex: none; overflow: hidden; background: #fbfbfb; }
.people { display: flex; align-items: center; height: 66px; padding: 0 2px 0 17px; gap: 5px; }
.me { width: 32px; height: 32px; border-radius: 50%; background: #17a34f; color: #eafff1; line-height: 32px; text-align: center; }
.gapped { margin: 0 7px 0 12px; }
.share { width: 73px; height: 44px; border-radius: 6px; background: #0d8bff; color: #e4f3ff; font-weight: 500; }
.modes { display: flex; align-items: center; gap: 8px; height: 45px; padding: 0 9px 10px 13px; border-bottom: 1px solid #e3e3e3; }
.zoom { display: flex; align-items: center; gap: 20px; margin-left: auto; }
.kind { display: flex; align-items: center; height: 67px; padding: 0 8px 0 23px; border-bottom: 1px solid #e3e3e3; }
.kind h2 { margin-right: 11px; font-size: 17px; font-weight: 600; }
.devbtn { display: flex; align-items: center; justify-content: center; width: 33px; height: 33px; margin: 0 12px 0 auto; border-radius: 6px; background: #dff0fb; color: #4a8fc4; }
.more { margin-left: 18px; }
.sec { padding: 0 8px 22px 23px; border-bottom: 1px solid #e3e3e3; }
.sec h3 { line-height: 56px; margin-bottom: 4px; }
.sechead { display: flex; align-items: center; gap: 18px; height: 56px; margin-bottom: 4px; }
.sechead h3 { margin: 0 auto 0 0; }
.off { padding-bottom: 0; color: #858585; }
.off .sechead { height: 55px; margin: 0; }
.off h3 { font-weight: 400; }
.grid { display: grid; grid-template-columns: minmax(0, 1fr) minmax(0, 1fr) 26px; column-gap: 13px; row-gap: 12px; grid-auto-rows: 32px; }
.grid > .plain { justify-content: flex-end; }
.seg { display: flex; gap: 2px; border-radius: 6px; overflow: hidden; }
.seg button { flex: 1; display: flex; align-items: center; justify-content: center; background: #f1f1f1; }
.grid .thin { stroke: #9a9a9a; stroke-width: 1; }
.grid .fat { stroke: #1b1b1b; stroke-width: 3; }
.val { display: flex; align-items: center; border-radius: 6px; background: #f1f1f1; color: #444; }
.val span { width: 32px; display: flex; justify-content: center; color: #8c8c8c; }
.val input { flex: 1; min-width: 0; outline: 0; }
.flow { grid-column: span 2; display: flex; border-radius: 6px; background: #f1f1f1; color: #777; }
.flow button { flex: 1; display: flex; align-items: center; justify-content: center; }
.flow .on { border: 1px solid #e2e2e2; border-radius: 6px; background: #fff; color: #333; }
.clip { display: flex; align-items: center; gap: 11px; }
.clip input { appearance: none; display: grid; place-items: center; width: 21px; height: 21px; border: 1px solid #e2e2e2; border-radius: 5px; background: #f4f4f4; }
.clip input::before { content: ""; width: 6px; height: 12px; border: solid #333; border-width: 0 1px 1px 0; transform: rotate(40deg); }
.fillrow { display: flex; align-items: center; gap: 18px; }
.style { flex: 1; display: flex; align-items: center; gap: 6px; height: 33px; padding: 0 6px; border: 1px solid #e2e2e2; border-radius: 6px; }
.style i { width: 21px; height: 22px; border: 1px solid #e6e6e6; border-radius: 4px; background: #fff; }
.last { margin-right: 76px; }

/* Floating tool bar */
.toolbar { position: absolute; left: 50%; bottom: 3px; transform: translateX(-50%); display: flex; align-items: center; height: 65px; padding-left: 11px; border-radius: 14px; background: #fbfbfb; box-shadow: 0 1px 5px rgba(0, 0, 0, .25); color: #333; }
.tool { display: flex; align-items: center; justify-content: center; width: 43px; height: 43px; margin-right: 6px; border-radius: 6px; }
.toolbar > svg { margin-right: 17px; }
.wide { margin-right: 10px; }
.active { background: #0d8bff; color: #d8eeff; }
.modeswitch { display: flex; align-items: center; height: 100%; margin-left: 6px; padding: 0 12px; border-left: 1px solid #e3e3e3; }
.modeswitch button { display: flex; align-items: center; justify-content: center; width: 42px; height: 42px; background: #f2f2f2; color: #888; }
.modeswitch .on { width: 39px; border-radius: 6px; background: #fff; color: #2f86d6; box-shadow: 0 1px 4px rgba(0, 0, 0, .2); }
.dockbar { position: absolute; left: 292px; bottom: 3px; width: 74px; height: 12px; border-radius: 5px; background: #333; }
.slide-no { position: absolute; right: 52px; bottom: 51px; font-size: 24px; line-height: 32px; font-weight: 300; color: #777; }
.help { position: absolute; right: 23px; bottom: 18px; width: 44px; height: 44px; border-radius: 50%; background: #161616; color: #fff; font-size: 24px; }
```
